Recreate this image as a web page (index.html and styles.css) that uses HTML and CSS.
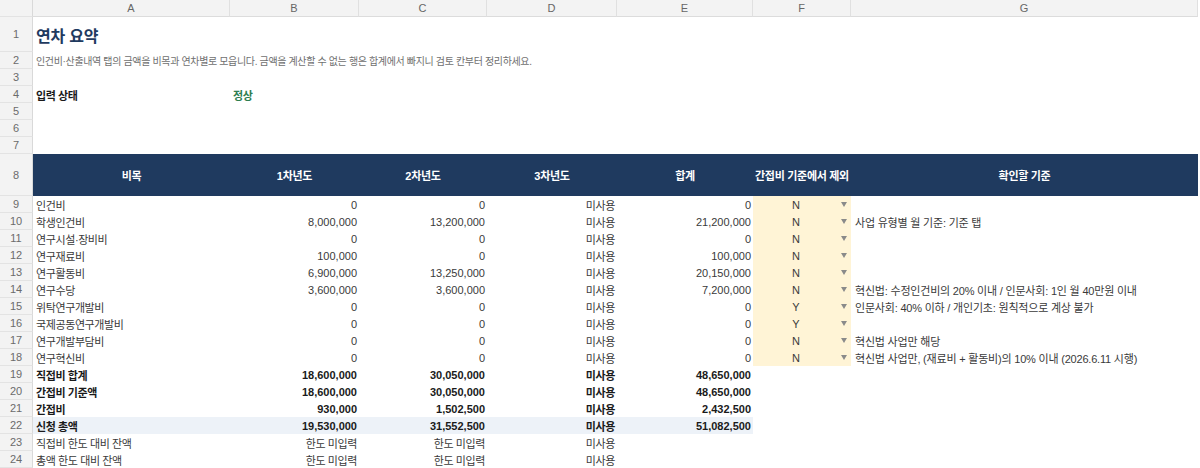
FILE: index.html
```html
<!DOCTYPE html>
<html lang="ko">
<head>
<meta charset="utf-8">
<title>연차 요약</title>
<link rel="stylesheet" href="styles.css">
</head>
<body>
<div class="sheet">
  <div class="row colheads">
    <div class="rh corner"></div>
    <div class="ch">A</div><div class="ch">B</div><div class="ch">C</div><div class="ch">D</div><div class="ch">E</div><div class="ch">F</div><div class="ch">G</div>
  </div>

  <div class="row r-title">
    <div class="rh">1</div>
    <div class="cell title">연차 요약</div><div class="cell"></div><div class="cell"></div><div class="cell"></div><div class="cell"></div><div class="cell"></div><div class="cell"></div>
  </div>
  <div class="row">
    <div class="rh">2</div>
    <div class="cell desc">인건비·산출내역 탭의 금액을 비목과 연차별로 모읍니다. 금액을 계산할 수 없는 행은 합계에서 빠지니 검토 칸부터 정리하세요.</div><div class="cell"></div><div class="cell"></div><div class="cell"></div><div class="cell"></div><div class="cell"></div><div class="cell"></div>
  </div>
  <div class="row">
    <div class="rh">3</div>
    <div class="cell"></div><div class="cell"></div><div class="cell"></div><div class="cell"></div><div class="cell"></div><div class="cell"></div><div class="cell"></div>
  </div>
  <div class="row">
    <div class="rh">4</div>
    <div class="cell ko bold dark">입력 상태</div><div class="cell ko bold ok">정상</div><div class="cell"></div><div class="cell"></div><div class="cell"></div><div class="cell"></div><div class="cell"></div>
  </div>
  <div class="row">
    <div class="rh">5</div>
    <div class="cell"></div><div class="cell"></div><div class="cell"></div><div class="cell"></div><div class="cell"></div><div class="cell"></div><div class="cell"></div>
  </div>
  <div class="row">
    <div class="rh">6</div>
    <div class="cell"></div><div class="cell"></div><div class="cell"></div><div class="cell"></div><div class="cell"></div><div class="cell"></div><div class="cell"></div>
  </div>
  <div class="row">
    <div class="rh">7</div>
    <div class="cell"></div><div class="cell"></div><div class="cell"></div><div class="cell"></div><div class="cell"></div><div class="cell"></div><div class="cell"></div>
  </div>

  <div class="row r-head">
    <div class="rh">8</div>
    <div class="hd">비목</div><div class="hd">1차년도</div><div class="hd">2차년도</div><div class="hd">3차년도</div><div class="hd">합계</div><div class="hd">간접비 기준에서 제외</div><div class="hd">확인할 기준</div>
  </div>

  <div class="row">
    <div class="rh">9</div>
    <div class="cell ko">인건비</div><div class="cell num">0</div><div class="cell num">0</div><div class="cell num ko">미사용</div><div class="cell num">0</div>
    <div class="cell dd"><span class="dd-v">N</span><span class="arrow"></span></div><div class="cell note"></div>
  </div>
  <div class="row">
    <div class="rh">10</div>
    <div class="cell ko">학생인건비</div><div class="cell num">8,000,000</div><div class="cell num">13,200,000</div><div class="cell num ko">미사용</div><div class="cell num">21,200,000</div>
    <div class="cell dd"><span class="dd-v">N</span><span class="arrow"></span></div><div class="cell note">사업 유형별 월 기준: 기준 탭</div>
  </div>
  <div class="row">
    <div class="rh">11</div>
    <div class="cell ko">연구시설·장비비</div><div class="cell num">0</div><div class="cell num">0</div><div class="cell num ko">미사용</div><div class="cell num">0</div>
    <div class="cell dd"><span class="dd-v">N</span><span class="arrow"></span></div><div class="cell note"></div>
  </div>
  <div class="row">
    <div class="rh">12</div>
    <div class="cell ko">연구재료비</div><div class="cell num">100,000</div><div class="cell num">0</div><div class="cell num ko">미사용</div><div class="cell num">100,000</div>
    <div class="cell dd"><span class="dd-v">N</span><span class="arrow"></span></div><div class="cell note"></div>
  </div>
  <div class="row">
    <div class="rh">13</div>
    <div class="cell ko">연구활동비</div><div class="cell num">6,900,000</div><div class="cell num">13,250,000</div><div class="cell num ko">미사용</div><div class="cell num">20,150,000</div>
    <div class="cell dd"><span class="dd-v">N</span><span class="arrow"></span></div><div class="cell note"></div>
  </div>
  <div class="row">
    <div class="rh">14</div>
    <div class="cell ko">연구수당</div><div class="cell num">3,600,000</div><div class="cell num">3,600,000</div><div class="cell num ko">미사용</div><div class="cell num">7,200,000</div>
    <div class="cell dd"><span class="dd-v">N</span><span class="arrow"></span></div><div class="cell note">혁신법: 수정인건비의 20% 이내 / 인문사회: 1인 월 40만원 이내</div>
  </div>
  <div class="row">
    <div class="rh">15</div>
    <div class="cell ko">위탁연구개발비</div><div class="cell num">0</div><div class="cell num">0</div><div class="cell num ko">미사용</div><div class="cell num">0</div>
    <div class="cell dd"><span class="dd-v">Y</span><span class="arrow"></span></div><div class="cell note">인문사회: 40% 이하 / 개인기초: 원칙적으로 계상 불가</div>
  </div>
  <div class="row">
    <div class="rh">16</div>
    <div class="cell ko">국제공동연구개발비</div><div class="cell num">0</div><div class="cell num">0</div><div class="cell num ko">미사용</div><div class="cell num">0</div>
    <div class="cell dd"><span class="dd-v">Y</span><span class="arrow"></span></div><div class="cell note"></div>
  </div>
  <div class="row">
    <div class="rh">17</div>
    <div class="cell ko">연구개발부담비</div><div class="cell num">0</div><div class="cell num">0</div><div class="cell num ko">미사용</div><div class="cell num">0</div>
    <div class="cell dd"><span class="dd-v">N</span><span class="arrow"></span></div><div class="cell note">혁신법 사업만 해당</div>
  </div>
  <div class="row">
    <div class="rh">18</div>
    <div class="cell ko">연구혁신비</div><div class="cell num">0</div><div class="cell num">0</div><div class="cell num ko">미사용</div><div class="cell num">0</div>
    <div class="cell dd"><span class="dd-v">N</span><span class="arrow"></span></div><div class="cell note">혁신법 사업만, (재료비 + 활동비)의 10% 이내 (2026.6.11 시행)</div>
  </div>

  <div class="row total">
    <div class="rh">19</div>
    <div class="cell ko">직접비 합계</div><div class="cell num">18,600,000</div><div class="cell num">30,050,000</div><div class="cell num ko">미사용</div><div class="cell num">48,650,000</div><div class="cell"></div><div class="cell"></div>
  </div>
  <div class="row total">
    <div class="rh">20</div>
    <div class="cell ko">간접비 기준액</div><div class="cell num">18,600,000</div><div class="cell num">30,050,000</div><div class="cell num ko">미사용</div><div class="cell num">48,650,000</div><div class="cell"></div><div class="cell"></div>
  </div>
  <div class="row total">
    <div class="rh">21</div>
    <div class="cell ko">간접비</div><div class="cell num">930,000</div><div class="cell num">1,502,500</div><div class="cell num ko">미사용</div><div class="cell num">2,432,500</div><div class="cell"></div><div class="cell"></div>
  </div>
  <div class="row total grand">
    <div class="rh">22</div>
    <div class="cell ko hl">신청 총액</div><div class="cell num hl">19,530,000</div><div class="cell num hl">31,552,500</div><div class="cell num ko hl">미사용</div><div class="cell num hl">51,082,500</div><div class="cell"></div><div class="cell"></div>
  </div>
  <div class="row">
    <div class="rh">23</div>
    <div class="cell ko">직접비 한도 대비 잔액</div><div class="cell num ko">한도 미입력</div><div class="cell num ko">한도 미입력</div><div class="cell num ko">미사용</div><div class="cell"></div><div class="cell"></div><div class="cell"></div>
  </div>
  <div class="row">
    <div class="rh">24</div>
    <div class="cell ko">총액 한도 대비 잔액</div><div class="cell num ko">한도 미입력</div><div class="cell num ko">한도 미입력</div><div class="cell num ko">미사용</div><div class="cell"></div><div class="cell"></div><div class="cell"></div>
  </div>
</div>
</body>
</html>
```

FILE: styles.css
```css
* { box-sizing: border-box; }

html, body {
  margin: 0;
  padding: 0;
  background: #ffffff;
}

body {
  font-family: "Liberation Sans", "Noto Sans CJK KR", sans-serif;
  font-size: 11px;
  color: #3a3a3a;
  overflow: hidden;
}

.sheet {
  display: flex;
  flex-direction: column;
  width: 1200px;
}

.row {
  display: grid;
  grid-template-columns: 33px 197px 129px 128px 130px 136px 98px 347px;
  height: 17px;
}

.r-title { height: 35px; }
.r-head { height: 42px; }

.rh {
  display: flex;
  align-items: center;
  justify-content: center;
  background: #f3f3f3;
  border-right: 1px solid #d9d9d9;
  border-bottom: 1px solid #e3e3e3;
  color: #6b6b6b;
  font-size: 11px;
}

.colheads .ch {
  display: flex;
  align-items: center;
  justify-content: center;
  background: #f3f3f3;
  border-right: 1px solid #e0e0e0;
  border-bottom: 1px solid #dcdcdc;
  color: #666666;
  font-size: 11px;
}

.cell {
  display: flex;
  align-items: center;
  padding: 0 2px 0 3px;
  white-space: nowrap;
  overflow: visible;
  min-width: 0;
}

.ko { letter-spacing: -0.4px; }

.note {
  letter-spacing: -0.2px;
  padding-left: 4px;
}

.num { justify-content: flex-end; }

.title {
  font-size: 16px;
  font-weight: 700;
  color: #1f3a5f;
  letter-spacing: -0.2px;
}

.desc {
  font-size: 10px;
  color: #6f6f6f;
  letter-spacing: -0.35px;
}

.bold { font-weight: 700; }
.dark { color: #1a1a1a; }
.ok { color: #2e7d4f; }

.hd {
  display: flex;
  align-items: center;
  justify-content: center;
  background: #1f3a5f;
  color: #ffffff;
  font-weight: 700;
  letter-spacing: -0.3px;
  white-space: nowrap;
}

.dd {
  background: #fff4d6;
  padding: 0 4px 0 0;
}

.dd-v {
  flex: 1;
  text-align: center;
  padding-right: 2px;
  color: #3a3a3a;
}

.arrow {
  width: 0;
  height: 0;
  border-left: 3px solid transparent;
  border-right: 3px solid transparent;
  border-top: 5px solid #8a8a8a;
}

.total .cell {
  font-weight: 700;
  color: #1a1a1a;
}

.hl { background: #edf2f8; }
```
